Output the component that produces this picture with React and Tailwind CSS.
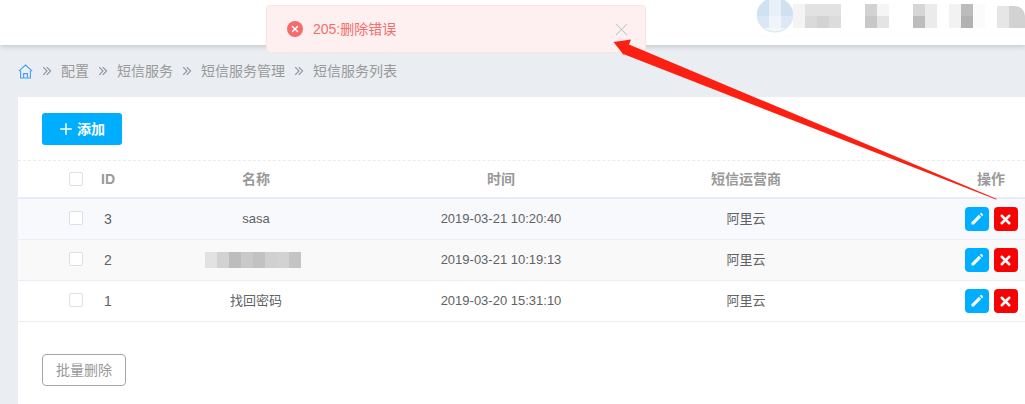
import React from "react";
import { Plus, X } from "lucide-react";

const FONT = { fontFamily: '"Liberation Sans", "Noto Sans CJK SC", sans-serif' };

const crumbs = ["配置", "短信服务", "短信服务管理", "短信服务列表"];

const rows = [
  { id: 3, name: "sasa", time: "2019-03-21 10:20:40", vendor: "阿里云", bg: "bg-[#f8f9fc]" },
  { id: 2, name: null, time: "2019-03-21 10:19:13", vendor: "阿里云", bg: "bg-[#f9f9f9]" },
  { id: 1, name: "找回密码", time: "2019-03-20 15:31:10", vendor: "阿里云", bg: "bg-white" },
];

const GRID = "grid grid-cols-[72px_36px_252.5px_245px_245px_245px] items-center w-[1100px]";

// pixelated user block in the header
const HeaderMosaic = () => (
  <svg width="268" height="45" viewBox="757 0 268 45" className="shrink-0">
    <defs>
      <clipPath id="avatar">
        <ellipse cx="775" cy="15" rx="18" ry="17" />
      </clipPath>
    </defs>
    <ellipse cx="775" cy="15" rx="18" ry="17" fill="#f4f8fb" stroke="#d6e5f0" />
    <g clipPath="url(#avatar)">
      <rect x="757" y="0" width="12" height="16" fill="#cfe2f1" />
      <rect x="769" y="0" width="12" height="16" fill="#e8f0f8" />
      <rect x="781" y="0" width="12" height="16" fill="#cfe1f0" />
      <rect x="757" y="16" width="12" height="12" fill="#dbe8f3" />
      <rect x="769" y="16" width="12" height="12" fill="#eff5fa" />
      <rect x="781" y="16" width="12" height="12" fill="#dce8f3" />
    </g>
    <rect x="793" y="4" width="12" height="24" fill="#f4f4f4" />
    <rect x="805" y="4" width="36" height="12" fill="#e2e2e2" />
    <rect x="805" y="16" width="12" height="12" fill="#dadada" />
    <rect x="817" y="16" width="12" height="12" fill="#d3d3d3" />
    <rect x="829" y="16" width="12" height="12" fill="#dcdcdc" />
    <rect x="865" y="4" width="12" height="12" fill="#d2d2d2" />
    <rect x="877" y="4" width="12" height="12" fill="#f5f5f5" />
    <rect x="865" y="16" width="12" height="12" fill="#c8c8c8" />
    <rect x="877" y="16" width="12" height="12" fill="#e4e4e4" />
    <rect x="913" y="4" width="12" height="12" fill="#d6d6d6" />
    <rect x="925" y="4" width="12" height="24" fill="#ebebeb" />
    <rect x="913" y="16" width="12" height="12" fill="#bdbdbd" />
    <rect x="949" y="4" width="12" height="24" fill="#f2f2f2" />
    <rect x="961" y="4" width="12" height="12" fill="#bcbcbc" />
    <rect x="961" y="16" width="12" height="12" fill="#b2b2b2" />
    <rect x="973" y="4" width="12" height="24" fill="#fbfbfb" />
    <rect x="997" y="6" width="12" height="22" fill="#e6e6e6" />
    <path d="M1009 6h6a10 10 0 0 1 10 10v12h-16z" fill="#d2d2d2" />
  </svg>
);

const NameMosaic = () => (
  <svg width="96" height="16" viewBox="0 0 96 16" className="mx-auto -translate-x-[3px]">
    {["#e2e2e2", "#d2d2d2", "#bdbdbd", "#c9c9c9", "#c2c2c2", "#d0d0d0", "#d2d2d2", "#c4c4c4"].map((c, i) => (
      <rect key={i} x={i * 12} y="0" width="12" height="16" fill={c} />
    ))}
  </svg>
);

const HomeIcon = () => (
  <svg width="15" height="15" viewBox="0 0 15 15" fill="none" stroke="#409eff" strokeWidth="1.1" className="shrink-0">
    <path d="M0.8 7.2 7.5 1l6.7 6.2" />
    <path d="M2.6 6.4v7.6h9.8V6.4" />
    <path d="M5.6 14V9.6h3.8V14" />
  </svg>
);

const CrumbArrow = () => (
  <svg width="14" height="14" viewBox="0 0 14 14" fill="none" stroke="#8f9399" strokeWidth="1.1" className="mx-[7px] shrink-0">
    <path d="M3.2 3.2 7 7l-3.800 3.800" />
    <path d="M6.800 3.200 10.600 7l-3.800 3.800" />
  </svg>
);

const Checkbox = ({ className = "" }) => (
  <div className={`ml-[51px] w-[14px] h-[14px] rounded-[2px] border border-[#dcdfe6] bg-white ${className}`} />
);

const PencilIcon = () => (
  <svg width="14" height="14" viewBox="0 0 14 14" fill="white">
    <path d="M1.500 10.200 8.900 2.800l2.300 2.300-7.400 7.400H1.500z" />
    <path d="M9.800 1.900l.7-.7a.9.9 0 0 1 1.300 0l1 1a.9.9 0 0 1 0 1.300l-.7.7z" />
  </svg>
);

const Actions = () => (
  <div className="flex justify-center gap-[5px]">
    <button className="w-6 h-6 rounded-[4px] bg-[#00aeff] flex items-center justify-center">
      <PencilIcon />
    </button>
    <button className="w-6 h-6 rounded-[4px] bg-[#f60404] flex items-center justify-center">
      <X size={15} color="white" strokeWidth={4} />
    </button>
  </div>
);

export default function App() {
  return (
    <div className="relative w-[1025px] h-[404px] overflow-hidden bg-[#eaedf2]" style={FONT}>
      {/* Top bar */}
      <header className="relative h-[45px] bg-white shadow-[0_1px_6px_rgba(0,0,0,0.2)] flex justify-end">
        <HeaderMosaic />
      </header>

      {/* Breadcrumb */}
      <nav className="h-[52px] pl-[18px] flex items-center text-sm text-[#999999]">
        <HomeIcon />
        {crumbs.map((c) => (
          <React.Fragment key={c}>
            <CrumbArrow />
            <span>{c}</span>
          </React.Fragment>
        ))}
      </nav>

      {/* Card */}
      <main className="ml-[18px] h-[307px] bg-white overflow-hidden">
        <div className="pt-4 pl-6 h-[64px] border-b border-dashed border-[#e8ebf0] box-border">
          <button className="w-20 h-8 pr-[2px] rounded-[3px] bg-[#00aeff] text-white text-sm font-bold flex items-center justify-center gap-[2px]">
            <Plus size={18} strokeWidth={2} />
            添加
          </button>
        </div>

        <div className={`${GRID} h-[38px] border-b-2 border-[#e6ebf5] text-sm font-bold text-[#999999] box-border`}>
          <Checkbox />
          <div className="text-center">ID</div>
          <div className="pl-[7.5px] text-center">名称</div>
          <div className="text-center">时间</div>
          <div className="text-center">短信运营商</div>
          <div className="text-center">操作</div>
        </div>

        {rows.map((r) => (
          <div key={r.id} className={`${GRID} ${r.bg} h-[41px] border-b border-[#ebeef5] text-[13px] text-[#606266] box-border`}>
            <Checkbox className="mb-[2px]" />
            <div className="text-center text-sm">{r.id}</div>
            <div className="pl-[7.5px] text-center">{r.name ?? <NameMosaic />}</div>
            <div className="text-center">{r.time}</div>
            <div className="text-center">{r.vendor}</div>
            <Actions />
          </div>
        ))}

        <div className="pl-6 pt-8">
          <button className="w-[84px] h-8 rounded-[4px] border border-[#a6a6a6] bg-white text-sm text-[#999999]">
            批量删除
          </button>
        </div>
      </main>

      {/* Error toast */}
      <div className="absolute left-[266px] top-[5px] w-[380px] h-[48px] rounded-[4px] border border-[#fde2e2] bg-[#fef0f0] flex items-center pl-[20px] pr-[13px]">
        <span className="w-4 h-4 rounded-full bg-[#f56c6c] flex items-center justify-center">
          <X size={10} color="white" strokeWidth={3.5} />
        </span>
        <span className="ml-[10px] text-sm text-[#f56c6c]">205:删除错误</span>
        <X size={21} color="#c0c4cc" strokeWidth={1.2} className="ml-auto" />
      </div>

      {/* Annotation arrow */}
      <svg className="absolute left-0 top-0 pointer-events-none" width="1025" height="404">
        <polygon
          points="613.5,42 631,39.5 629,44.500 997,199 996,199.500 622,53.500 625,56.500"
          fill="#fb2012"
        />
      </svg>
    </div>
  );
}
